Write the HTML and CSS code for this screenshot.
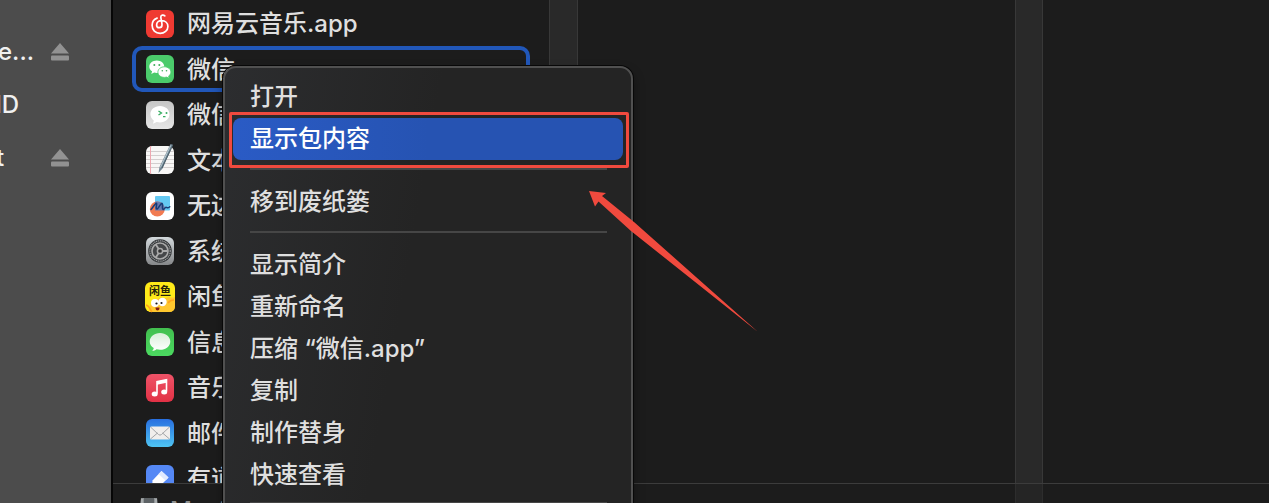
FILE: index.html
```html
<!DOCTYPE html>
<html lang="zh-CN">
<head>
<meta charset="utf-8">
<title>应用程序</title>
<link rel="stylesheet" href="styles.css">
</head>
<body>
<div class="finder">
  <aside class="sidebar">
    <div class="volume"><span class="volume-name volume-name-dots">e...</span>
      <button class="eject" aria-label="推出"><svg width="18" height="18" viewBox="0 0 18 18"><path d="M9 0 18 10.500H0Z"/><rect y="12.500" width="18" height="5" rx="1"/></svg></button></div>
    <div class="volume"><span class="volume-name volume-name-long">HD</span></div>
    <div class="volume"><span class="volume-name volume-name-short">t</span>
      <button class="eject" aria-label="推出"><svg width="18" height="18" viewBox="0 0 18 18"><path d="M9 0 18 10.500H0Z"/><rect y="12.500" width="18" height="5" rx="1"/></svg></button></div>
  </aside>

  <main class="browser">
    <div class="columns">
      <ul class="files">
        <li class="file"><svg class="icon" viewBox="0 0 28 28"><rect width="28" height="28" rx="6" fill="#ef3a32"/><path d="M18.800 5.800c-1.300-1.200-4-.900-4 1.200 0 1.200 1.200 5.600 1.200 7.700 0 2-1.300 3-2.700 3-1.600 0-2.700-1.200-2.700-2.800 0-2.700 2.400-4.200 5-4.200 3.800 0 6.300 2.500 6.300 5.700 0 3.900-3.500 6.900-7.700 6.900-4.800 0-8.100-3.300-8.100-8 0-3.500 2-6.200 5-7.200" fill="none" stroke="#fff" stroke-width="1.700" stroke-linecap="round"/></svg><span class="file-name">网易云音乐.app</span></li>
        <li class="file file-selected"><svg class="icon" viewBox="0 0 28 28"><rect width="28" height="28" rx="6" fill="#4bcb6b"/><path d="M10.800 5.500c4.300 0 7.500 2.800 7.500 6.200s-3.200 6.200-7.500 6.200c-1 0-1.800-.100-2.600-.400L5.300 19l.800-2.700c-1.800-1.100-2.800-2.700-2.800-4.600 0-3.400 3.200-6.200 7.500-6.200Z" fill="#fff"/><path d="M18.400 11.800c3.700 0 6.500 2.400 6.500 5.300 0 1.600-.900 3-2.300 4l.600 2.200-2.500-1.200c-.7.200-1.500.300-2.300.300-3.700 0-6.500-2.400-6.500-5.300s2.800-5.300 6.500-5.300Z" fill="#fff" stroke="#4bcb6b" stroke-width=".8"/><g fill="#3fae5b"><circle cx="8.300" cy="10" r="1"/><circle cx="13.300" cy="10" r="1"/><circle cx="16.300" cy="15.800" r=".8"/><circle cx="20.500" cy="15.800" r=".8"/></g></svg><span class="file-name">微信.app</span></li>
        <li class="file"><svg class="icon" viewBox="0 0 28 28"><defs><linearGradient id="silver" x2="0" y2="1"><stop stop-color="#c6c6c6"/><stop offset="1" stop-color="#e6e6e6"/></linearGradient></defs><rect width="28" height="28" rx="6" fill="url(#silver)"/><path d="M14 5c5.400 0 9.500 3.600 9.500 8.200s-4.100 8.200-9.500 8.200c-1.100 0-2.200-.200-3.200-.500L7 22.800l.800-3.400c-2.100-1.500-3.400-3.700-3.400-6.200C4.400 8.600 8.600 5 14 5Z" fill="#fff"/><path d="m12.500 10 3 2-3 2M17 15.700h2.500" fill="none" stroke="#35ad60" stroke-width="1.300"/><circle cx="20.500" cy="12" r="1" fill="#35ad60"/></svg><span class="file-name">微信开发者工具.app</span></li>
        <li class="file"><svg class="icon" viewBox="0 0 28 28"><rect width="28" height="28" rx="6" fill="#f8f7f6"/><path d="M0 5.500h28M0 9.500h28M0 13.500h28M0 17.500h28M0 21.500h28" stroke="#d3cfcf" stroke-width="1"/><path d="M4.500 0v28" stroke="#efa7b0"/><path d="m24.500-2 2.500.800L16.500 22.500 12.500 27l1-6Z" fill="#708592"/><path d="m24.700-.500-10.300 22" stroke="#b9cad3"/><path d="m26.500 0-10.500 22" stroke="#344753" stroke-width=".7"/></svg><span class="file-name">文本编辑.app</span></li>
        <li class="file"><svg class="icon" viewBox="0 0 28 28"><rect width="28" height="28" rx="6" fill="#fff"/><rect x="9" y="4" width="15" height="14.500" rx="1" fill="#64c9f2"/><circle cx="11.300" cy="17" r="7.500" fill="#f17b52"/><path d="M9 9.900c4.500-1.600 9.300 1.700 9.700 6.300l-.200 2.300H9Z" fill="#687baf"/><path d="M5 17.500c2-2 4.100-6.200 5.300-6.300 1.300 0-1.200 5.900.5 5.900 1.400 0 3.800-5.900 5.100-5.900s-.300 6.300 1.400 6.300c1.100 0 1.500-2.200 2.700-2.300 1.300-.100 1 1.900 3.800-.5" fill="none" stroke="#183d77" stroke-width="1.500" stroke-linecap="round"/></svg><span class="file-name">无边记.app</span></li>
        <li class="file"><svg class="icon" viewBox="0 0 28 28"><defs><linearGradient id="steel" x2="0" y2="1"><stop stop-color="#d2d8db"/><stop offset="1" stop-color="#858789"/></linearGradient></defs><rect width="28" height="28" rx="6" fill="url(#steel)"/><circle cx="14" cy="14" r="11.800" fill="#35383a"/><circle cx="14" cy="14" r="10.200" fill="none" stroke="#9a9c9e" stroke-width="1.200" stroke-dasharray="1.200 .7"/><circle cx="14" cy="14" r="8" fill="#454749" stroke="#aaa" stroke-width="1.600"/><path d="M14 14h7.500M14 14l-4.200-6.500M14 14l-4.200 6.500" stroke="#aaa" stroke-width="1.800"/><circle cx="14" cy="14" r="2.600" fill="#333" stroke="#aaa" stroke-width="1.500"/></svg><span class="file-name">系统设置.app</span></li>
        <li class="file"><svg class="icon" viewBox="0 0 28 28"><rect x="-1" y="-1" width="30" height="30" rx="6" fill="#ffea19"/><path d="M3 29c0-7 3-12 9-13 2-2 5-2 6 0 5-4 8 0 11-2v9q0 6-6 6Z" fill="#ffc72e"/><path d="M0 22c4 1 4 5 6 7M22 20c2-3 4-3 6-3" fill="none" stroke="#ffa51c" stroke-width="1.500"/><text class="icon-text" x="14" y="12" text-anchor="middle">闲鱼</text><circle cx="9" cy="20" r="4" fill="#fff"/><circle cx="16.500" cy="19" r="4.200" fill="#fff"/><circle cx="10.500" cy="20.500" r="1.100" fill="#181818"/><circle cx="15.500" cy="20" r="1.100" fill="#181818"/><path d="M9.500 24.500h4q0 3-2 3t-2-3Z" fill="#851c16"/></svg><span class="file-name">闲鱼.app</span></li>
        <li class="file"><svg class="icon" viewBox="0 0 28 28"><defs><linearGradient id="green" x2="0" y2="1"><stop stop-color="#42bf4f"/><stop offset="1" stop-color="#4bd960"/></linearGradient><linearGradient id="bubble" x2="0" y2="1"><stop stop-color="#d9efd9"/><stop offset="1" stop-color="#fff"/></linearGradient></defs><rect width="28" height="28" rx="6" fill="url(#green)"/><path d="M14 5c5.800 0 10.300 3.800 10.300 8.400s-4.500 8.400-10.300 8.400c-1.200 0-2.400-.200-3.500-.500-1.200 1-2.700 1.600-4.300 1.600.9-.800 1.500-1.900 1.500-3C5.200 18.400 3.700 16 3.700 13.400 3.700 8.800 8.200 5 14 5Z" fill="url(#bubble)"/></svg><span class="file-name">信息.app</span></li>
        <li class="file"><svg class="icon" viewBox="0 0 28 28"><defs><linearGradient id="red" x2="0" y2="1"><stop stop-color="#ee5368"/><stop offset="1" stop-color="#e23145"/></linearGradient></defs><rect width="28" height="28" rx="6" fill="url(#red)"/><path d="M11 19.500V7.700l9.500-2V17.500" fill="none" stroke="#fff" stroke-width="1.600"/><path d="M11 7.500l9.500-2v3.300l-9.500 2Z" fill="#fff"/><ellipse cx="8.700" cy="20" rx="3" ry="2.500" fill="#fff"/><ellipse cx="18.200" cy="18" rx="3" ry="2.500" fill="#fff"/></svg><span class="file-name">音乐.app</span></li>
        <li class="file"><svg class="icon" viewBox="0 0 28 28"><defs><linearGradient id="blue" x2="0" y2="1"><stop stop-color="#286fe0"/><stop offset="1" stop-color="#4fc4f2"/></linearGradient></defs><rect width="28" height="28" rx="6" fill="url(#blue)"/><rect x="4" y="7.500" width="20" height="13" rx="1.500" fill="#f0eeec"/><path d="m4.500 8 8 7.500q1.500 1.300 3 0l8-7.500M4.500 20l7-6M23.500 20l-7-6" fill="none" stroke="#a3a5a8" stroke-width="1"/></svg><span class="file-name">邮件.app</span></li>
        <li class="file"><svg class="icon" viewBox="0 0 28 28"><rect width="28" height="28" rx="6" fill="#5588f5"/><path d="m15.500 6 7 6.500L12 23l-6 1 .5-8.500Z" fill="#fff"/><path d="m15.500 6 7 6.500-3 3-7-6.500Z" fill="#e1e9ff"/></svg><span class="file-name">有道云笔记.app</span></li>
      </ul>
      <div class="gutter"></div>
      <div></div>
      <div class="gutter"></div>
      <div></div>
    </div>
    <footer class="pathbar">
      <div class="path"><svg width="20" height="18" viewBox="0 0 20 18"><path d="M2 1h16l2 17H0Z" fill="#8f9496"/><path d="M5 1h10v6H5Z" fill="#5d6265"/><path d="M3 2v13M17 2v13" stroke="#c0c3c4"/></svg><span>Macintosh HD</span></div>
      <div class="gutter"></div>
      <div></div>
      <div class="gutter"></div>
      <div></div>
    </footer>
  </main>
</div>

<div class="menu" role="menu">
  <button class="item" role="menuitem">打开</button>
  <button class="item item-active" role="menuitem">显示包内容</button>
  <hr class="separator">
  <button class="item" role="menuitem">移到废纸篓</button>
  <hr class="separator">
  <button class="item" role="menuitem">显示简介</button>
  <button class="item" role="menuitem">重新命名</button>
  <button class="item" role="menuitem">压缩 “微信.app”</button>
  <button class="item" role="menuitem">复制</button>
  <button class="item" role="menuitem">制作替身</button>
  <button class="item" role="menuitem">快速查看</button>
  <hr class="separator">
</div>

<div class="highlight"></div>
<svg class="arrow" width="170" height="142" viewBox="0 0 170 142"><path d="M0 0 17 2 13 5 45 31 169 141 42 40 9.500 10.500 6 15.500Z"/></svg>
</body>
</html>
```
FILE: styles.css
```css
* {
  box-sizing: border-box;
}

body {
  margin: 0;
  height: 100vh;
  overflow: hidden;
  position: relative;
  background: #1c1c1c;
  color: #dfdfdf;
  font: 500 24px/36px Inter, "Noto Sans CJK SC", sans-serif;
}

button {
  border: 0;
  padding: 0;
  background: none;
  color: inherit;
  font: inherit;
}

.finder {
  display: flex;
  height: 100%;
}

.sidebar {
  flex: none;
  width: 113px;
  padding-top: 25px;
  overflow: hidden;
  border-right: 2px solid #060606;
  background: #4c4c4c;
}

.volume {
  display: flex;
  align-items: center;
  justify-content: space-between;
  height: 53px;
  padding-right: 42px;
  color: #f0f0f0;
}

.volume-name-dots {
  margin-left: -2px;
}

.volume-name-long {
  margin-left: -16px;
}

.volume-name-short {
  margin-left: -4px;
}

.eject {
  display: flex;
  fill: #929292;
}

.browser {
  display: flex;
  flex: 1;
  flex-direction: column;
  min-width: 0;
}

.columns,
.pathbar {
  display: grid;
  grid-template-columns: 436px 29px 437px 28px 1fr;
}

.columns {
  flex: 1;
  min-height: 0;
  overflow: hidden;
}

.gutter {
  border: solid #383838;
  border-width: 0 1px;
  background: #292929;
}

.files {
  min-width: 0;
  margin: 0;
  padding: 1px 19px 0;
  list-style: none;
}

.file {
  display: flex;
  align-items: center;
  gap: 13px;
  height: 45px;
  padding-left: 14px;
  border-radius: 10px;
  white-space: nowrap;
}

.file:nth-child(even) {
  height: 46px;
}

.file-name {
  padding-top: 1px;
}

.file-selected {
  box-shadow: inset 0 0 0 4px #2157b9;
}

.icon {
  flex: none;
  width: 28px;
  height: 28px;
  overflow: visible;
}

.icon-text {
  fill: #27230a;
  font: 700 11px "Noto Sans CJK SC", sans-serif;
}

.pathbar {
  flex: none;
  height: 20px;
  overflow: hidden;
  border-top: 1px solid #3c3c3c;
}

.pathbar .gutter {
  border-color: #2d2d2d;
  background: #252525;
}

.path {
  display: flex;
  align-items: flex-start;
  gap: 11px;
  padding: 13px 0 0 26px;
  color: #909090;
  line-height: 28px;
}

.menu {
  position: absolute;
  top: 66px;
  left: 223px;
  width: 410px;
  padding: 8px;
  border: 2px solid #505050;
  border-radius: 13px;
  background: linear-gradient(100deg, #2c2d2f, #242424 45%);
  box-shadow: 0 0 0 1px #080808, 0 6px 12px #0006;
}

.item {
  display: block;
  width: 100%;
  height: 42px;
  padding-left: 17px;
  border-radius: 8px;
  text-align: left;
}

.item-active {
  background: linear-gradient(90deg, #2a5bc5, #2653b2 50%);
  color: #fff;
}

.separator {
  height: 2px;
  margin: 8px 16px 11px 17px;
  border: 0;
  background: #464646;
}

.separator:last-child {
  margin-top: 6px;
}

.highlight {
  position: absolute;
  top: 112px;
  left: 229px;
  width: 400px;
  height: 56px;
  border: 3px solid #f04a3e;
  border-radius: 2px;
}

.arrow {
  position: absolute;
  top: 191px;
  left: 589px;
  fill: #f04a3e;
}
```
